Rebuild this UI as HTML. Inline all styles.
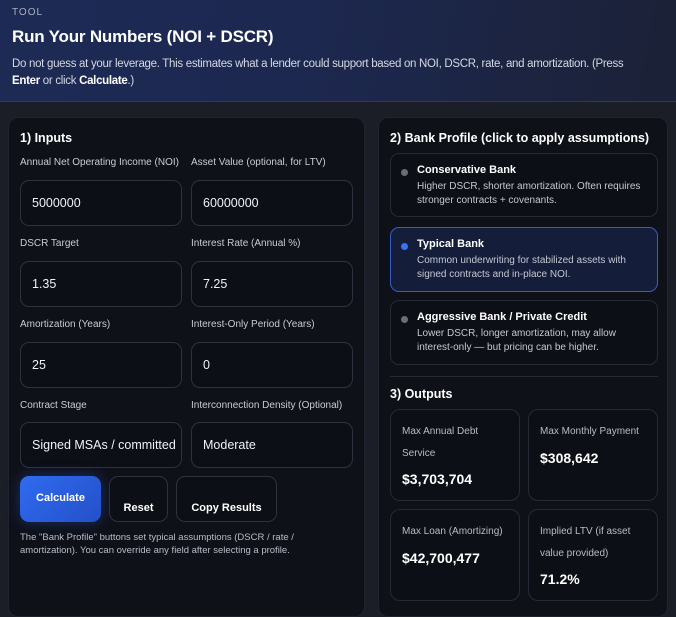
<!DOCTYPE html>
<html><head><meta charset="utf-8"><style>
*{box-sizing:border-box;margin:0;padding:0}
body{width:676px;height:607px;overflow:hidden;background:#1b1e27;font-family:"Liberation Sans",sans-serif;color:#e8eaf0;position:relative}
.hdr{position:absolute;left:0;top:0;width:676px;height:102px;background:linear-gradient(100deg,#1c2a55 0%,#1d2850 45%,#1b2136 100%);border-bottom:1px solid #353a4a}
.tool{position:absolute;left:12px;top:7px;font-size:10px;letter-spacing:1px;color:#aab0c0}
h1{position:absolute;left:12px;top:27px;font-size:17px;font-weight:bold;color:#fff;letter-spacing:-0.2px}
.sub{position:absolute;left:12px;top:56px;width:640px;font-size:11.5px;line-height:17px;color:#d4d8e2;letter-spacing:-0.3px}
.sub b{color:#fff}
.panel{position:absolute;background:#0f1119;border-radius:10px;border:1px solid #20232e}
.ptitle{position:absolute;font-size:12.5px;font-weight:bold;color:#fff}
.lbl{position:absolute;font-size:10px;color:#c8ccd6}
.inp{position:absolute;width:162px;height:46px;border:1px solid #2e323e;border-radius:9px;background:#0d0f16;font-size:12.5px;color:#f0f2f6;padding:0 0 0 11px;line-height:44px}
.btn{position:absolute;height:46px;border-radius:9px;border:1px solid #2e323e;background:#0d0f16;font-size:11px;font-weight:bold;color:#fff;text-align:center}
.note{position:absolute;left:20px;top:531px;width:300px;font-size:9.5px;line-height:13px;color:#b8bcc8}
.card{position:absolute;left:390px;width:268px;border:1px solid #262a36;border-radius:9px;background:#0d0f16}
.card .t{position:absolute;left:26px;top:10px;font-size:11px;font-weight:bold;color:#fff}
.card .d{position:absolute;left:26px;top:26px;font-size:10px;line-height:14px;color:#c4c8d2;width:228px}
.dot{position:absolute;left:10px;top:15px;width:7px;height:7px;border-radius:50%;background:#6b6e78}
.oc{position:absolute;width:130px;height:92px;border:1px solid #262a36;border-radius:10px;background:#0d0f16}
.oc .l{position:absolute;left:11px;top:11px;font-size:10px;line-height:22px;color:#b8bcc8;width:112px}
.oc .v{position:absolute;left:11px;font-size:14px;font-weight:bold;color:#fff}
</style></head><body>
<div class="hdr"></div>
<div class="tool">TOOL</div>
<h1>Run Your Numbers (NOI + DSCR)</h1>
<div class="sub">Do not guess at your leverage. This estimates what a lender could support based on NOI, DSCR, rate, and amortization. (Press <b>Enter</b> or click <b>Calculate</b>.)</div>

<div class="panel" style="left:8px;top:117px;width:357px;height:500px"></div>
<div class="ptitle" style="left:20px;top:131px">1) Inputs</div>
<div class="lbl" style="left:20px;top:157px">Annual Net Operating Income (NOI)</div>
<div class="lbl" style="left:191px;top:157px">Asset Value (optional, for LTV)</div>
<div class="inp" style="left:20px;top:180px">5000000</div>
<div class="inp" style="left:191px;top:180px">60000000</div>
<div class="lbl" style="left:20px;top:238px">DSCR Target</div>
<div class="lbl" style="left:191px;top:238px">Interest Rate (Annual %)</div>
<div class="inp" style="left:20px;top:261px">1.35</div>
<div class="inp" style="left:191px;top:261px">7.25</div>
<div class="lbl" style="left:20px;top:319px">Amortization (Years)</div>
<div class="lbl" style="left:191px;top:319px">Interest-Only Period (Years)</div>
<div class="inp" style="left:20px;top:342px">25</div>
<div class="inp" style="left:191px;top:342px">0</div>
<div class="lbl" style="left:20px;top:400px">Contract Stage</div>
<div class="lbl" style="left:191px;top:400px">Interconnection Density (Optional)</div>
<div class="inp" style="left:20px;top:422px;overflow:hidden;white-space:nowrap">Signed MSAs / committed</div>
<div class="inp" style="left:191px;top:422px">Moderate</div>
<div class="btn" style="left:20px;top:476px;width:81px;background:linear-gradient(135deg,#2f6bf0,#2450c8);border:none;line-height:44px;box-shadow:0 0 14px rgba(50,100,240,0.35)">Calculate</div>
<div class="btn" style="left:109px;top:476px;width:59px;line-height:62px">Reset</div>
<div class="btn" style="left:176px;top:476px;width:101px;line-height:62px">Copy Results</div>
<div class="note">The "Bank Profile" buttons set typical assumptions (DSCR / rate / amortization). You can override any field after selecting a profile.</div>

<div class="panel" style="left:378px;top:117px;width:290px;height:500px"></div>
<div class="ptitle" style="left:390px;top:131px">2) Bank Profile (click to apply assumptions)</div>
<div class="card" style="top:153px;height:64px"><div class="dot"></div><div class="t">Conservative Bank</div><div class="d">Higher DSCR, shorter amortization. Often requires stronger contracts + covenants.</div></div>
<div class="card" style="top:227px;height:65px;background:#141d3a;border-color:#3a5bc0"><div class="dot" style="background:#3a72f5"></div><div class="t">Typical Bank</div><div class="d">Common underwriting for stabilized assets with signed contracts and in-place NOI.</div></div>
<div class="card" style="top:300px;height:65px"><div class="dot"></div><div class="t">Aggressive Bank / Private Credit</div><div class="d">Lower DSCR, longer amortization, may allow interest-only — but pricing can be higher.</div></div>
<div style="position:absolute;left:390px;top:376px;width:268px;height:1px;background:#262a36"></div>
<div class="ptitle" style="left:390px;top:387px">3) Outputs</div>
<div class="oc" style="left:390px;top:409px"><div class="l">Max Annual Debt Service</div><div class="v" style="top:61px">$3,703,704</div></div>
<div class="oc" style="left:528px;top:409px"><div class="l">Max Monthly Payment</div><div class="v" style="top:40px">$308,642</div></div>
<div class="oc" style="left:390px;top:509px"><div class="l" style="white-space:nowrap">Max Loan (Amortizing)</div><div class="v" style="top:40px">$42,700,477</div></div>
<div class="oc" style="left:528px;top:509px"><div class="l">Implied LTV (if asset value provided)</div><div class="v" style="top:61px">71.2%</div></div>
</body></html>
